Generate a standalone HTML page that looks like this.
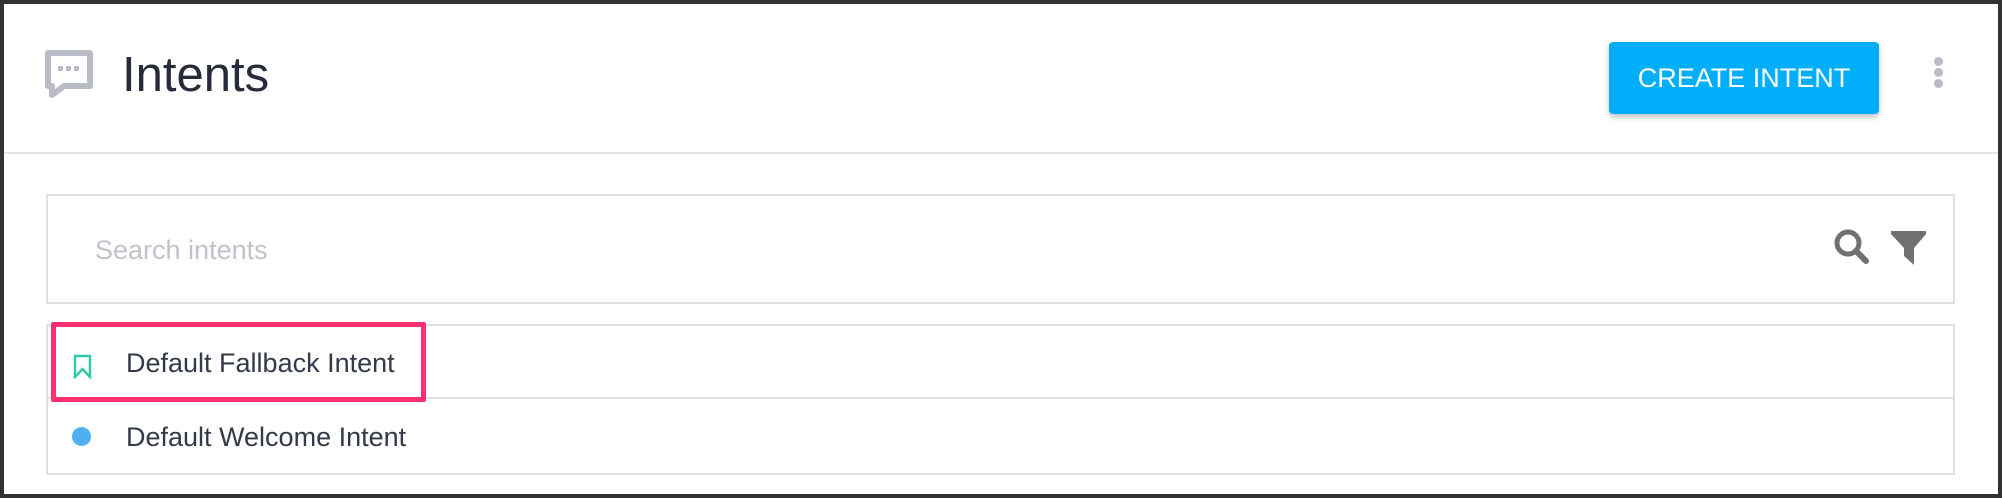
<!DOCTYPE html>
<html><head><style>
*{margin:0;padding:0;box-sizing:border-box}
body{width:2002px;height:498px;background:#333;position:relative;overflow:hidden;font-family:"Liberation Sans",sans-serif}
.main{position:absolute;left:4px;top:4px;width:1994px;height:490px;background:#fff}
.abs{position:absolute}
</style></head><body>
<div class="main"></div>
<svg class="abs" style="left:44px;top:50px" width="50" height="48" viewBox="0 0 50 48">
<path d="M4 3 H46 V36 H20 L8 45 V36 H4 Z" fill="none" stroke="#b9bcc6" stroke-width="6" stroke-linejoin="round"/>
<rect x="14" y="16" width="5" height="5" rx="1" fill="#b9bcc6"/><rect x="22" y="16" width="5" height="5" rx="1" fill="#b9bcc6"/><rect x="30" y="16" width="5" height="5" rx="1" fill="#b9bcc6"/>
</svg>
<div class="abs" style="left:122px;top:47px;font-size:49px;color:#262c3a;line-height:56px">Intents</div>
<div class="abs" style="left:1609px;top:42px;width:270px;height:72px;background:#00aefa;border-radius:4px;box-shadow:0 3px 6px rgba(0,0,0,.25);color:#fff;font-size:27px;text-align:center;line-height:72px">CREATE INTENT</div>
<div class="abs" style="left:1934px;top:57px;width:9px;height:9px;border-radius:50%;background:#b9bcc6"></div>
<div class="abs" style="left:1934px;top:68px;width:9px;height:9px;border-radius:50%;background:#b9bcc6"></div>
<div class="abs" style="left:1934px;top:79px;width:9px;height:9px;border-radius:50%;background:#b9bcc6"></div>
<div class="abs" style="left:4px;top:152px;width:1994px;height:2px;background:#e4e4e4"></div>
<div class="abs" style="left:46px;top:194px;width:1909px;height:110px;border:2px solid #e0e0e0"></div>
<div class="abs" style="left:95px;top:232px;font-size:27px;color:#c0c3cb;line-height:36px">Search intents</div>
<svg class="abs" style="left:1833px;top:228px" width="40" height="38" viewBox="0 0 40 38">
<circle cx="15" cy="15" r="11" fill="none" stroke="#707070" stroke-width="5"/>
<path d="M23 23 L33 33" stroke="#707070" stroke-width="6" stroke-linecap="round"/>
</svg>
<svg class="abs" style="left:1890px;top:230px" width="38" height="36" viewBox="0 0 38 36">
<path d="M1 1 H36 V4 L24 18 V35 L14 26 V18 L1 4 Z" fill="#707070"/>
</svg>
<div class="abs" style="left:46px;top:324px;width:1909px;height:151px;border:2px solid #e0e0e0"></div>
<div class="abs" style="left:46px;top:397px;width:1909px;height:2px;background:#e0e0e0"></div>
<div class="abs" style="left:51px;top:322px;width:375px;height:80px;border:5px solid #ff2f6e;border-radius:2px"></div>
<svg class="abs" style="left:73px;top:354px" width="20" height="25" viewBox="0 0 20 25">
<path d="M2 2 H17 V23 L9.5 15 L2 23 Z" fill="none" stroke="#2ec9a6" stroke-width="2.4" stroke-linejoin="miter"/>
</svg>
<div class="abs" style="left:126px;top:346px;font-size:27px;color:#333a48;line-height:34px">Default Fallback Intent</div>
<div class="abs" style="left:72px;top:427px;width:19px;height:19px;border-radius:50%;background:#4faff0"></div>
<div class="abs" style="left:126px;top:420px;font-size:27px;color:#333a48;line-height:34px">Default Welcome Intent</div>
</body></html>
